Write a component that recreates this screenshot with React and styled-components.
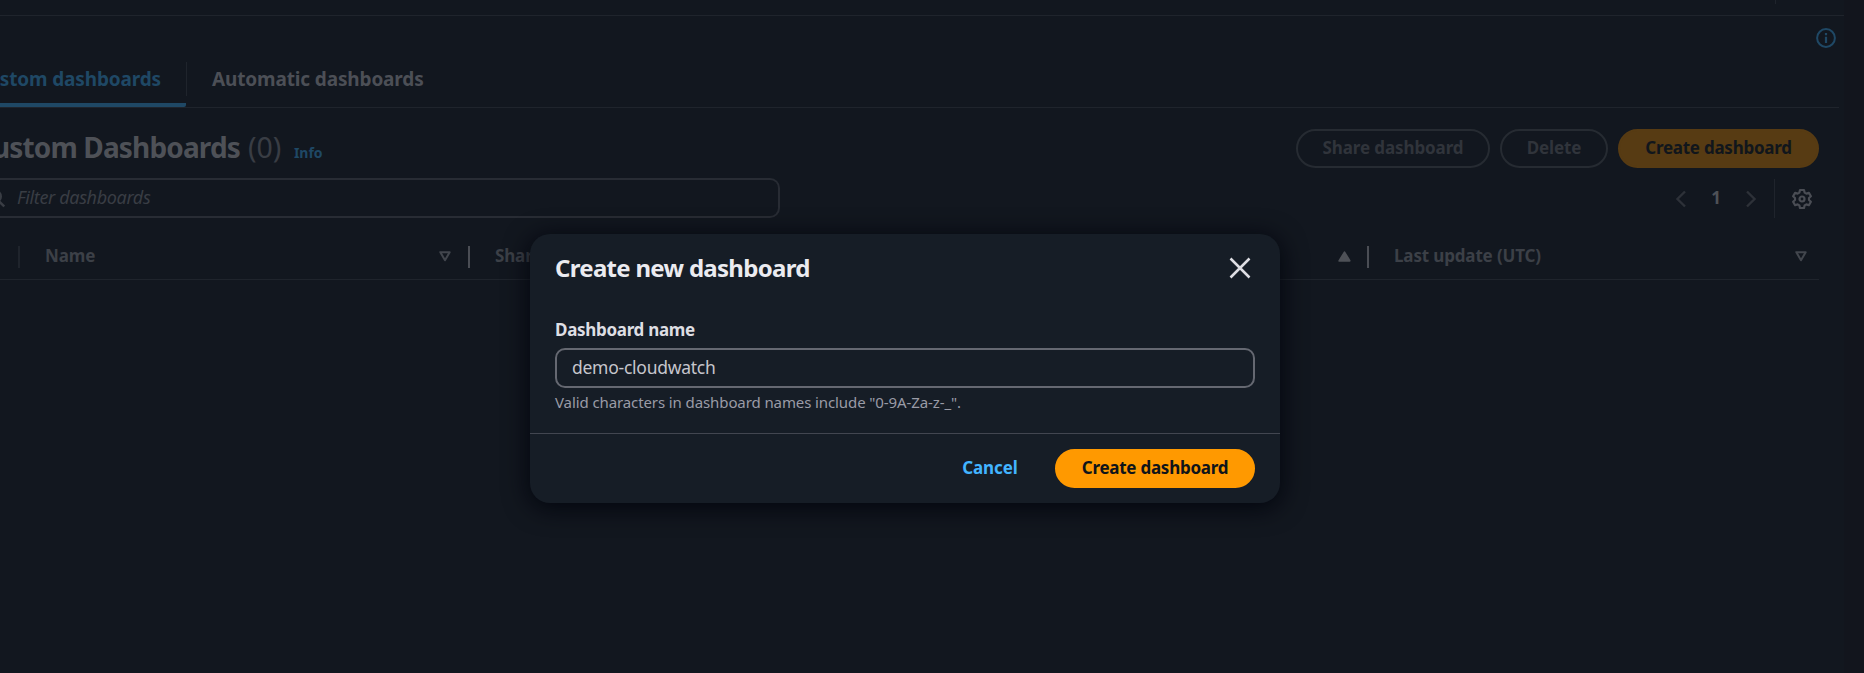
import React from "react";
import styled, { createGlobalStyle, css } from "styled-components";

const Global = createGlobalStyle`
  * { box-sizing: border-box; }
  body { margin: 0; background: #12171f; overflow: hidden; }
  button, input { font: inherit; margin: 0; }
`;

const Page = styled.div`
  display: flex;
  width: 1864px;
  height: 673px;
  overflow: hidden;
  font-family: "Noto Sans", "Open Sans", sans-serif;
  font-size: 17px;
  color: #4c4f56;
`;
const Main = styled.main`
  width: 1844px;
  flex: none;
`;
const SideRail = styled.aside`
  flex: 1;
  background: #12151d;
`;
const TopBar = styled.header`
  height: 16px;
  border-bottom: 1px solid #1f242c;
  display: flex;
  justify-content: flex-end;
  padding-right: 68px;
`;
const TopDivider = styled.span`
  width: 1px;
  height: 4px;
  background: #1f242c;
`;
const HelpRow = styled.div`
  display: flex;
  justify-content: flex-end;
  height: 46px;
  padding: 12px 8px 0 0;
`;
const Tabs = styled.nav`
  display: flex;
  width: 1839px;
  height: 46px;
  border-bottom: 1px solid #1f242c;
`;
const Tab = styled.div`
  display: flex;
  justify-content: ${(p) => (p.$active ? "flex-end" : "flex-start")};
  width: ${(p) => (p.$active ? "186px" : "auto")};
  height: 45px;
  padding: 0 25px;
  font-size: 19px;
  font-weight: 700;
  line-height: 34px;
  letter-spacing: -0.14px;
  white-space: nowrap;
  color: ${(p) => (p.$active ? "#1f4865" : "#4c4f56")};
  ${(p) =>
    p.$active &&
    css`
      border-bottom: 4px solid #1f4865;
      border-bottom-right-radius: 2px;
    `}
`;
const TabDivider = styled.span`
  width: 1px;
  height: 34px;
  background: #1f242c;
`;
const Panel = styled.section`
  width: 1819px;
  padding-top: 21px;
`;
const TitleRow = styled.div`
  display: flex;
  justify-content: space-between;
  height: 39px;
`;
const TitleGroup = styled.div`
  display: flex;
  align-items: baseline;
  white-space: nowrap;
  line-height: 36px;
`;
const TitleClip = styled.div`
  display: flex;
  justify-content: flex-end;
  width: 240px;
`;
const Title = styled.h2`
  margin: 0;
  font-size: 28px;
  letter-spacing: -0.85px;
  color: #4e5157;
`;
const Count = styled.span`
  margin-left: 8px;
  font-size: 28.5px;
  color: #393d44;
`;
const InfoLink = styled.a`
  margin-left: 12.5px;
  font-size: 14px;
  font-weight: 700;
  color: #1f4865;
`;
const Actions = styled.div`
  display: flex;
  gap: 10px;
`;
const Button = styled.button`
  width: ${(p) => p.$w}px;
  height: 39px;
  padding: 0 0 3px;
  border: 2px solid #262b32;
  border-radius: 20px;
  background: transparent;
  color: #30343b;
  font-size: 17px;
  font-weight: 700;
  letter-spacing: ${(p) => p.$ls || -0.1}px;
  white-space: nowrap;
  ${(p) =>
    p.$kind === "dimmed" &&
    css`
      border-color: #573b13;
      background: #573b13;
      color: #11161c;
    `}
  ${(p) =>
    p.$kind === "primary" &&
    css`
      border-color: #ff9900;
      background: #ff9900;
      color: #0f141a;
    `}
  ${(p) =>
    p.$kind === "link" &&
    css`
      border-color: transparent;
      color: #42b4ff;
    `}
`;
const FilterRow = styled.div`
  display: flex;
  justify-content: space-between;
  height: 40px;
  margin-top: 10px;
`;
const Filter = styled.div`
  display: flex;
  align-items: center;
  width: 780px;
  height: 40px;
  border: 2px solid #282c34;
  border-left: 0;
  border-radius: 0 10px 10px 0;
  font-size: 18px;
  font-style: italic;
  letter-spacing: -0.35px;
  color: #393d44;
`;
const FilterText = styled.span`
  padding: 0 0 2px 12px;
`;
const Tools = styled.div`
  display: flex;
  align-items: center;
  height: 39px;
  margin-top: 1px;
  padding: 0 6px 0 0;
`;
const PageNumber = styled.span`
  width: 60px;
  padding-bottom: 3px;
  text-align: center;
  font-weight: 700;
  color: #4e5157;
`;
const ToolDivider = styled.span`
  width: 1px;
  height: 39px;
  margin: 0 16px 0 18px;
  background: #1f242c;
`;
const HeaderRow = styled.div`
  display: flex;
  align-items: center;
  height: 46px;
  margin-top: 16px;
  border-bottom: 1px solid #1f242c;
`;
const ColDivider = styled.span`
  flex: none;
  width: 2px;
  height: 22px;
  background: ${(p) => (p.$soft ? "#1f242c" : "#4a4d54")};
`;
const SelectColumn = styled.div`
  flex: none;
  width: 18px;
`;
const Column = styled.div`
  display: flex;
  align-items: center;
  justify-content: space-between;
  width: ${(p) => p.$w}px;
  padding: 0 ${(p) => p.$r}px 0 25px;
  font-weight: 700;
  letter-spacing: -0.15px;
  line-height: 22px;
  color: #3c4047;
`;
const ColName = styled.span`
  padding-bottom: 1px;
`;
const Icon = styled.svg`
  display: block;
  flex: none;
  fill: none;
  stroke-width: 2;
`;

const Overlay = styled.div`
  position: absolute;
  inset: 0;
  width: 1864px;
  height: 673px;
  display: flex;
  align-items: center;
  justify-content: center;
  padding: 64px 54px 0 0;
  font-family: "Noto Sans", "Open Sans", sans-serif;
`;
const Dialog = styled.div`
  width: 750px;
  height: 269px;
  border-radius: 20px;
  background: #161d26;
  box-shadow: 0 4px 24px 2px rgba(0, 4, 12, 0.85);
`;
const DialogHeader = styled.div`
  display: flex;
  align-items: flex-start;
  justify-content: space-between;
  height: 85px;
  padding: 17px 29px 0 25px;
`;
const DialogTitle = styled.h1`
  margin: 0;
  font-size: 24px;
  line-height: 34px;
  letter-spacing: -0.7px;
  color: #ebebf0;
`;
const CloseIcon = styled(Icon)`
  margin-top: 6px;
`;
const DialogBody = styled.div`
  height: 114px;
  padding: 0 25px;
`;
const Label = styled.label`
  display: block;
  height: 29px;
  font-size: 17px;
  font-weight: 700;
  line-height: 21px;
  letter-spacing: -0.3px;
  color: #dedee3;
`;
const NameInput = styled.input`
  display: block;
  width: 700px;
  height: 40px;
  padding: 0 15px 3px;
  border: 2px solid #656871;
  border-radius: 10px;
  outline: 0;
  background: #161d26;
  color: #c6c6cd;
  font-size: 17.5px;
  letter-spacing: -0.26px;
`;
const Hint = styled.p`
  margin: 3px 0 0;
  font-size: 15px;
  line-height: 22px;
  letter-spacing: -0.1px;
  color: #9a9ba6;
`;
const DialogFooter = styled.div`
  display: flex;
  justify-content: flex-end;
  gap: 10px;
  padding: 15px 25px 0;
  border-top: 1px solid #424650;
`;

const SortDown = () => (
  <Icon width="12" height="11" viewBox="0 0 12 11" stroke="#42464d" strokeLinejoin="round">
    <path d="M1.3 1.2h9.4L6 9.2z" />
  </Icon>
);
const SortUp = () => (
  <Icon width="13" height="11" viewBox="0 0 13 11" stroke="#4e5157" strokeLinejoin="round">
    <path d="M1.4 9.8h10.2L6.5 1.4z" fill="#4e5157" />
  </Icon>
);
const Chevron = ({ next }) => (
  <Icon width="10" height="18" viewBox="0 0 10 18" stroke="#2d3138">
    <path strokeWidth="2.4" d={next ? "M1 1.5L8.6 9L1 16.5" : "M9 1.5L1.4 9L9 16.5"} />
  </Icon>
);
const Gear = () => (
  <Icon width="22" height="22" viewBox="0 0 22 22" stroke="#4a4d54" strokeLinejoin="round">
    <path
      strokeWidth="2.2"
      d="M9 2h4l.6 2.600 1.800 1 2.500-.800 2 3.500-1.900 1.700v2l1.900 1.700-2 3.500-2.500-.800-1.800 1L13 20H9l-.6-2.600-1.800-1-2.500.8-2-3.500L4 12V10L2.100 8.300l2-3.500 2.500.8 1.800-1z"
    />
    <circle cx="11" cy="11" r="2.500" strokeWidth="2.200" />
  </Icon>
);
const InfoCircle = () => (
  <Icon width="20" height="20" viewBox="0 0 20 20" stroke="#1f4865">
    <circle cx="10" cy="10" r="8.9" />
    <path d="M10 8.7v6.3M10 5v2.2" strokeWidth="2.2" />
  </Icon>
);
const Search = () => (
  <Icon width="5" height="20" viewBox="15 0 5 20" stroke="#393d44">
    <circle cx="9.5" cy="8.5" r="6.500" />
    <path d="M13.700 13l5.500 5.500" strokeWidth="2.400" />
  </Icon>
);

export default function App() {
  return (
    <>
      <Global />
      <Page>
        <Main>
          <TopBar><TopDivider /></TopBar>
          <HelpRow><InfoCircle /></HelpRow>
          <Tabs>
            <Tab $active>Custom dashboards</Tab>
            <TabDivider />
            <Tab>Automatic dashboards</Tab>
          </Tabs>
          <Panel>
            <TitleRow>
              <TitleGroup>
                <TitleClip><Title>Custom Dashboards</Title></TitleClip>
                <Count>(0)</Count>
                <InfoLink>Info</InfoLink>
              </TitleGroup>
              <Actions>
                <Button $w={194}>Share dashboard</Button>
                <Button $w={108}>Delete</Button>
                <Button $w={201} $kind="dimmed" $ls={-0.25}>Create dashboard</Button>
              </Actions>
            </TitleRow>
            <FilterRow>
              <Filter><Search /><FilterText>Filter dashboards</FilterText></Filter>
              <Tools>
                <Chevron />
                <PageNumber>1</PageNumber>
                <Chevron next />
                <ToolDivider />
                <Gear />
              </Tools>
            </FilterRow>
            <HeaderRow>
              <SelectColumn />
              <ColDivider $soft />
              <Column $w={448} $r={17}><ColName>Name</ColName><SortDown /></Column>
              <ColDivider />
              <Column $w={897} $r={16}><ColName>Sharing</ColName><SortUp /></Column>
              <ColDivider />
              <Column $w={450} $r={12}><ColName>Last update (UTC)</ColName><SortDown /></Column>
            </HeaderRow>
          </Panel>
        </Main>
        <SideRail />
      </Page>
      <Overlay>
        <Dialog role="dialog">
          <DialogHeader>
            <DialogTitle>Create new dashboard</DialogTitle>
            <CloseIcon width="22" height="22" viewBox="0 0 22 22" stroke="#dedee3">
              <path d="M1.500 1.500l19 19M20.500 1.500l-19 19" strokeWidth="2.500" />
            </CloseIcon>
          </DialogHeader>
          <DialogBody>
            <Label htmlFor="dashboard-name">Dashboard name</Label>
            <NameInput id="dashboard-name" defaultValue="demo-cloudwatch" />
            <Hint>Valid characters in dashboard names include "0-9A-Za-z-_".</Hint>
          </DialogBody>
          <DialogFooter>
            <Button $w={110} $kind="link">Cancel</Button>
            <Button $w={200} $kind="primary" $ls={-0.25}>Create dashboard</Button>
          </DialogFooter>
        </Dialog>
      </Overlay>
    </>
  );
}
